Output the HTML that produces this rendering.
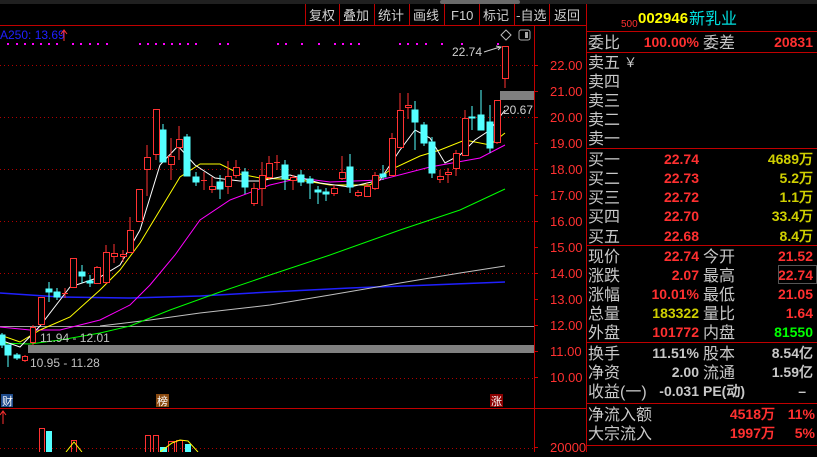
<!DOCTYPE html>
<html><head><meta charset="utf-8"><style>
html,body{margin:0;padding:0;background:#000;}
body{width:817px;height:452px;overflow:hidden;}
svg text{font-family:"Liberation Sans","WenQuanYi Zen Hei",sans-serif;}
.cn{font-family:"WenQuanYi Zen Hei","Noto Sans CJK SC",sans-serif;}
</style></head><body>
<svg width="817" height="452" viewBox="0 0 817 452" xmlns="http://www.w3.org/2000/svg">
<rect width="817" height="452" fill="#000"/>
<!-- top bar -->
<rect x="0" y="0" width="817" height="4" fill="#202020"/>
<rect x="440" y="0" width="80" height="4" rx="2" fill="#6a6a6a"/>
<g stroke="#c00000" stroke-width="1" fill="none">
<line x1="0" y1="25.5" x2="586" y2="25.5"/>
<line x1="305.5" y1="4" x2="305.5" y2="25"/><line x1="339.5" y1="4" x2="339.5" y2="25"/>
<line x1="374.5" y1="4" x2="374.5" y2="25"/><line x1="409.5" y1="4" x2="409.5" y2="25"/>
<line x1="444.5" y1="4" x2="444.5" y2="25"/><line x1="479.5" y1="4" x2="479.5" y2="25"/>
<line x1="514.5" y1="4" x2="514.5" y2="25"/><line x1="549.5" y1="4" x2="549.5" y2="25"/>
<line x1="586.5" y1="4" x2="586.5" y2="452"/>
<line x1="534.5" y1="25" x2="534.5" y2="452"/>
<line x1="0" y1="408.5" x2="586" y2="408.5"/>
</g>
<g fill="#d0d0d0" font-size="13" class="cn">
<text x="309" y="20" class="cn">复权</text><text x="343" y="20" class="cn">叠加</text>
<text x="378" y="20" class="cn">统计</text><text x="413" y="20" class="cn">画线</text>
<text x="451" y="20">F10</text><text x="483" y="20" class="cn">标记</text>
<text x="516" y="20" class="cn">-自选</text><text x="554" y="20" class="cn">返回</text>
</g>
<text x="0" y="39" fill="#2020ff" font-size="12">A250: 13.69</text>
<path d="M64 41 V31 M61 34 L64 30 L67 34" stroke="#ff3030" fill="none"/>
<path d="M506 30 L511 35 L506 40 L501 35 Z" stroke="#bbb" fill="none"/>
<rect x="519" y="30" width="11" height="10" rx="2" stroke="#aaa" fill="none"/><rect x="525" y="32" width="3" height="6" fill="#aaa"/>
<!-- magenta dots -->
<g fill="#ff00ff">
<rect x="7" y="43" width="2" height="2"/><rect x="16" y="43" width="2" height="2"/><rect x="24" y="43" width="2" height="2"/><rect x="32" y="43" width="2" height="2"/><rect x="40" y="43" width="2" height="2"/><rect x="48" y="43" width="2" height="2"/><rect x="56" y="43" width="2" height="2"/>
<rect x="72" y="43" width="2" height="2"/><rect x="80" y="43" width="2" height="2"/><rect x="89" y="43" width="2" height="2"/><rect x="97" y="43" width="2" height="2"/><rect x="106" y="43" width="2" height="2"/>
<rect x="139" y="43" width="2" height="2"/><rect x="147" y="43" width="2" height="2"/><rect x="155" y="43" width="2" height="2"/><rect x="163" y="43" width="2" height="2"/><rect x="171" y="43" width="2" height="2"/><rect x="179" y="43" width="2" height="2"/><rect x="187" y="43" width="2" height="2"/><rect x="195" y="43" width="2" height="2"/>
<rect x="219" y="43" width="2" height="2"/><rect x="227" y="43" width="2" height="2"/>
<rect x="277" y="43" width="2" height="2"/><rect x="285" y="43" width="2" height="2"/><rect x="301" y="43" width="2" height="2"/><rect x="318" y="43" width="2" height="2"/>
<rect x="334" y="43" width="2" height="2"/><rect x="342" y="43" width="2" height="2"/><rect x="350" y="43" width="2" height="2"/><rect x="358" y="43" width="2" height="2"/>
<rect x="399" y="43" width="2" height="2"/><rect x="407" y="43" width="2" height="2"/><rect x="416" y="43" width="2" height="2"/><rect x="425" y="43" width="2" height="2"/><rect x="441" y="43" width="2" height="2"/><rect x="461" y="43" width="2" height="2"/><rect x="497" y="43" width="2" height="2"/>
</g>
<!-- grid -->
<g stroke="#b00000" stroke-dasharray="1,3">
<line x1="0" y1="65.5" x2="534" y2="65.5"/><line x1="0" y1="117.5" x2="534" y2="117.5"/>
<line x1="0" y1="169.5" x2="534" y2="169.5"/><line x1="0" y1="221.5" x2="534" y2="221.5"/>
<line x1="0" y1="273.5" x2="534" y2="273.5"/><line x1="0" y1="378.5" x2="534" y2="378.5"/>
<line x1="0" y1="448.5" x2="534" y2="448.5"/>
</g>
<!-- axis -->
<g stroke="#d00000"><line x1="534" y1="65.5" x2="538" y2="65.5"/><line x1="534" y1="91.5" x2="538" y2="91.5"/><line x1="534" y1="117.5" x2="538" y2="117.5"/><line x1="534" y1="143.5" x2="538" y2="143.5"/><line x1="534" y1="169.5" x2="538" y2="169.5"/><line x1="534" y1="195.5" x2="538" y2="195.5"/><line x1="534" y1="221.5" x2="538" y2="221.5"/><line x1="534" y1="247.5" x2="538" y2="247.5"/><line x1="534" y1="273.5" x2="538" y2="273.5"/><line x1="534" y1="299.5" x2="538" y2="299.5"/><line x1="534" y1="325.5" x2="538" y2="325.5"/><line x1="534" y1="351.5" x2="538" y2="351.5"/><line x1="534" y1="377.5" x2="538" y2="377.5"/><line x1="534" y1="447.5" x2="538" y2="447.5"/></g>
<g fill="#ff3030" font-size="13">
<text x="550" y="70">22.00</text><text x="550" y="96">21.00</text><text x="550" y="122">20.00</text><text x="550" y="148">19.00</text><text x="550" y="174">18.00</text><text x="550" y="200">17.00</text><text x="550" y="226">16.00</text><text x="550" y="252">15.00</text><text x="550" y="278">14.00</text><text x="550" y="304">13.00</text><text x="550" y="330">12.00</text><text x="550" y="356">11.00</text><text x="550" y="382">10.00</text><text x="550" y="452">20000</text>
</g>
<!-- bands -->
<line x1="0" y1="326.5" x2="534" y2="326.5" stroke="#a0a0a0"/>
<rect x="28" y="345" width="506" height="8" fill="#808080"/>
<rect x="500" y="91" width="34" height="9" fill="#808080"/>
<!-- MAs -->
<g fill="none" stroke-width="1">
<polyline stroke="#2020ff" stroke-width="1.5" points="0,293 60,297 130,298 200,296 270,292 350,288 430,285 505,282"/>
<polyline stroke="#c0c0c0" points="100,326 150,320 200,313 270,305 330,295 400,283 460,273 505,266"/>
<polyline stroke="#00ff00" points="0,343 30,344 60,340 100,333 130,326 170,310 220,292 270,275 330,255 400,230 460,210 505,189"/>
<polyline stroke="#ff00ff" points="0,327 30,330 60,330 100,320 130,305 150,285 175,255 200,220 230,200 270,185 300,178 330,182 380,180 430,167 480,158 505,145"/>
<polyline stroke="#ffff00" points="0,335 20,342 40,330 70,317 100,290 120,270 140,243 160,210 180,177 200,164 220,164 240,174 260,178 300,180 330,185 370,185 390,170 420,156 440,150 465,140 490,145 505,133"/>
<polyline stroke="#ffffff" points="0,340 20,347 40,326 70,287 100,277 120,265 140,230 160,165 178,146 195,165 215,178 240,181 260,181 290,175 320,183 350,187 380,180 400,150 415,130 430,138 445,163 460,155 475,140 490,130 505,110"/>
</g>
<!-- candles -->
<g id="c" stroke-width="1">
<g stroke="#54ffff" fill="#54ffff">
<line x1="2" y1="333" x2="2" y2="348"/><rect x="-1" y="335" width="6" height="10"/>
<line x1="8" y1="345" x2="8" y2="367"/><rect x="5" y="345" width="6" height="10"/>
<line x1="17" y1="353" x2="17" y2="360"/><rect x="14" y="355" width="6" height="3"/>
<line x1="49" y1="282" x2="49" y2="302"/><rect x="46" y="289" width="6" height="3"/>
<line x1="57" y1="288" x2="57" y2="300"/><rect x="54" y="292" width="6" height="5"/>
<line x1="82" y1="265" x2="82" y2="283"/><rect x="79" y="272" width="6" height="4"/>
<line x1="90" y1="275" x2="90" y2="287"/><rect x="87" y="281" width="6" height="2"/>
<line x1="163" y1="124" x2="163" y2="162"/><rect x="160" y="130" width="6" height="32"/>
<line x1="187" y1="134" x2="187" y2="176"/><rect x="184" y="137" width="6" height="39"/>
<line x1="196" y1="172" x2="196" y2="186"/><rect x="193" y="177" width="6" height="5"/>
<line x1="220" y1="175" x2="220" y2="199"/><rect x="217" y="182" width="6" height="7"/>
<line x1="245" y1="168" x2="245" y2="194"/><rect x="242" y="172" width="6" height="15"/>
<line x1="285" y1="160" x2="285" y2="190"/><rect x="282" y="165" width="6" height="14"/>
<line x1="301" y1="170" x2="301" y2="186"/><rect x="298" y="175" width="6" height="7"/>
<line x1="310" y1="176" x2="310" y2="199"/><rect x="307" y="179" width="6" height="4"/>
<line x1="318" y1="186" x2="318" y2="204"/><rect x="315" y="190" width="6" height="2"/>
<line x1="326" y1="188" x2="326" y2="201"/><rect x="323" y="192" width="6" height="2"/>
<line x1="350" y1="154" x2="350" y2="193"/><rect x="347" y="167" width="6" height="20"/>
<line x1="383" y1="165" x2="383" y2="180"/><rect x="380" y="174" width="6" height="3"/>
<line x1="415" y1="101" x2="415" y2="150"/><rect x="412" y="110" width="6" height="12"/>
<line x1="424" y1="122" x2="424" y2="146"/><rect x="421" y="125" width="6" height="18"/>
<line x1="432" y1="137" x2="432" y2="178"/><rect x="429" y="142" width="6" height="31"/>
<line x1="472" y1="106" x2="472" y2="130"/><rect x="469" y="117" width="6" height="1"/>
<line x1="481" y1="90" x2="481" y2="130"/><rect x="478" y="115" width="6" height="15"/>
<line x1="490" y1="105" x2="490" y2="153"/><rect x="487" y="122" width="6" height="26"/>
</g>
<g stroke="#ff3232" fill="#000">
<line x1="25" y1="355" x2="25" y2="362"/><rect x="22.5" y="356.5" width="5" height="4"/>
<line x1="33" y1="325" x2="33" y2="345"/><rect x="30.5" y="327.5" width="5" height="15"/>
<rect x="38.5" y="297.5" width="6" height="27"/>
<line x1="65" y1="288" x2="65" y2="298"/><line x1="62" y1="293.5" x2="68" y2="293.5"/>
<rect x="70.5" y="258.5" width="6" height="29"/>
<line x1="97" y1="266" x2="97" y2="283"/><rect x="94.5" y="267.5" width="6" height="16"/>
<line x1="106" y1="245" x2="106" y2="284"/><rect x="103.5" y="252.5" width="6" height="30"/>
<line x1="114" y1="244" x2="114" y2="263"/><rect x="111.5" y="253.5" width="6" height="3"/>
<line x1="123" y1="250" x2="123" y2="262"/><rect x="120.5" y="254.5" width="6" height="2"/>
<line x1="130" y1="217" x2="130" y2="252"/><rect x="127.5" y="230.5" width="6" height="22"/>
<rect x="136.5" y="189.5" width="6" height="32"/>
<line x1="147" y1="145" x2="147" y2="196"/><rect x="144.5" y="157.5" width="6" height="12"/>
<line x1="156" y1="109" x2="156" y2="160"/><rect x="153.5" y="109.5" width="6" height="45"/>
<line x1="171" y1="138" x2="171" y2="180"/><rect x="168.5" y="156.5" width="6" height="8"/>
<line x1="179" y1="126" x2="179" y2="160"/><rect x="176.5" y="139.5" width="6" height="8"/>
<line x1="204" y1="172" x2="204" y2="190"/><line x1="201" y1="180.5" x2="207" y2="180.5"/>
<line x1="212" y1="177" x2="212" y2="193"/><rect x="209.5" y="186.5" width="6" height="3"/>
<line x1="228" y1="161" x2="228" y2="194"/><rect x="225.5" y="176.5" width="6" height="10"/>
<line x1="236" y1="160" x2="236" y2="178"/><rect x="233.5" y="167.5" width="6" height="8"/>
<line x1="254" y1="183" x2="254" y2="206"/><rect x="251.5" y="188.5" width="6" height="15"/>
<line x1="262" y1="162" x2="262" y2="206"/><rect x="259.5" y="175.5" width="6" height="13"/>
<line x1="269" y1="156" x2="269" y2="180"/><rect x="266.5" y="163.5" width="6" height="14"/>
<line x1="277" y1="155" x2="277" y2="170"/><line x1="274" y1="162.5" x2="280" y2="162.5"/>
<line x1="293" y1="175" x2="293" y2="190"/><rect x="290.5" y="177.5" width="6" height="3"/>
<line x1="334" y1="185" x2="334" y2="196"/><rect x="331.5" y="188.5" width="6" height="5"/>
<line x1="342" y1="156" x2="342" y2="180"/><rect x="339.5" y="172.5" width="6" height="6"/>
<line x1="358" y1="190" x2="358" y2="197"/><rect x="355.5" y="192.5" width="6" height="3"/>
<line x1="367" y1="183" x2="367" y2="197"/><rect x="364.5" y="186.5" width="6" height="10"/>
<line x1="375" y1="172" x2="375" y2="190"/><rect x="372.5" y="175.5" width="6" height="13"/>
<line x1="392" y1="133" x2="392" y2="176"/><rect x="389.5" y="138.5" width="6" height="37"/>
<line x1="400" y1="93" x2="400" y2="148"/><rect x="397.5" y="110.5" width="6" height="37"/>
<line x1="408" y1="93" x2="408" y2="119"/><rect x="405.5" y="105.5" width="6" height="2"/>
<line x1="440" y1="170" x2="440" y2="183"/><rect x="437.5" y="176.5" width="6" height="3"/>
<line x1="448" y1="168" x2="448" y2="183"/><rect x="445.5" y="172.5" width="6" height="2"/>
<line x1="456" y1="150" x2="456" y2="176"/><rect x="453.5" y="153.5" width="6" height="15"/>
<line x1="465" y1="110" x2="465" y2="156"/><rect x="462.5" y="118.5" width="6" height="37"/>
<line x1="497" y1="100" x2="497" y2="144"/><rect x="494.5" y="100.5" width="6" height="42"/>
<line x1="505" y1="46" x2="505" y2="88"/><rect x="502.5" y="46.5" width="6" height="32"/>
</g>
</g>
<!-- annotations -->
<text x="452" y="56" fill="#d0d0d0" font-size="12">22.74</text>
<path d="M484 52 L500 47 M496 46 L501 47 L498 50" stroke="#ccc" fill="none"/>
<text x="503" y="114" fill="#d0d0d0" font-size="12">20.67</text>
<text x="40" y="342" fill="#c0c0c0" font-size="12">11.94 - 12.01</text>
<text x="30" y="367" fill="#c0c0c0" font-size="12">10.95 - 11.28</text>
<rect x="1" y="394" width="12" height="13" fill="#1e4a8a"/><text x="2" y="405" fill="#fff" font-size="11" class="cn">财</text>
<rect x="156" y="394" width="13" height="13" fill="#8a4a10"/><text x="157" y="405" fill="#fff" font-size="11" class="cn">榜</text>
<rect x="490" y="394" width="13" height="13" fill="#8a0000"/><text x="491" y="405" fill="#fff" font-size="11" class="cn">涨</text>
<path d="M3 424 V412 M0 415 L3 411 L6 415" stroke="#ff3030" fill="none"/>
<!-- volume -->
<g stroke="#ff3232" fill="none">
<rect x="39.5" y="428.5" width="5" height="30"/><rect x="71.5" y="440.5" width="5" height="20"/>
<rect x="145.5" y="435.5" width="5" height="20"/><rect x="153.5" y="435.5" width="5" height="20"/>
<rect x="168.5" y="441.5" width="6" height="20"/><rect x="176.5" y="440.5" width="6" height="20"/>
</g>
<g fill="#54ffff"><rect x="46" y="431" width="6" height="22"/><rect x="160" y="447" width="7" height="6"/><rect x="185" y="444" width="6" height="8"/></g>
<polyline points="66,452 74,442 82,452" stroke="#ffff00" fill="none"/>
<polyline points="160,452 172,443 180,440 188,441 198,452" stroke="#ffff00" fill="none"/>
<!-- right panel -->
<g stroke="#c00000">
<line x1="586" y1="31.5" x2="817" y2="31.5"/><line x1="586" y1="52.5" x2="817" y2="52.5"/>
<line x1="586" y1="148.5" x2="817" y2="148.5"/><line x1="586" y1="245.5" x2="817" y2="245.5"/>
<line x1="586" y1="342.5" x2="817" y2="342.5"/><line x1="586" y1="403.5" x2="817" y2="403.5"/>
<line x1="586" y1="445.5" x2="817" y2="445.5"/>
</g>
<text x="621" y="27" fill="#ff3030" font-size="10">500</text>
<text x="638" y="23" fill="#ffff00" font-size="15" font-weight="bold">002946</text>
<text x="689" y="24" fill="#00e0e0" font-size="16" class="cn">新乳业</text>
<g fill="#c8c8c8" font-size="16" class="cn">
<text x="588" y="48">委比</text><text x="703" y="48">委差</text>
<text x="588" y="68">卖五</text><text x="588" y="87">卖四</text><text x="588" y="106">卖三</text><text x="588" y="125">卖二</text><text x="588" y="144">卖一</text>
<text x="588" y="165">买一</text><text x="588" y="184">买二</text><text x="588" y="203">买三</text><text x="588" y="222">买四</text><text x="588" y="242">买五</text>
<text x="588" y="262">现价</text><text x="703" y="262">今开</text>
<text x="588" y="281">涨跌</text><text x="703" y="281">最高</text>
<text x="588" y="300">涨幅</text><text x="703" y="300">最低</text>
<text x="588" y="319">总量</text><text x="703" y="319">量比</text>
<text x="588" y="338">外盘</text><text x="703" y="338">内盘</text>
<text x="588" y="359">换手</text><text x="703" y="359">股本</text>
<text x="588" y="378">净资</text><text x="703" y="378">流通</text>
<text x="588" y="397">收益(一)</text>
<text x="588" y="420">净流入额</text><text x="588" y="439">大宗流入</text>
</g>
<text x="624" y="67" fill="#c8c8c8" font-size="13">￥</text>
<g font-size="14" font-weight="bold" text-anchor="end">
<text x="699" y="47" fill="#ff3030">100.00%</text><text x="813" y="47" fill="#ff3030">20831</text>
<g fill="#ff3030"><text x="699" y="164">22.74</text><text x="699" y="183">22.73</text><text x="699" y="202">22.72</text><text x="699" y="221">22.70</text><text x="699" y="241">22.68</text>
<text x="699" y="261">22.74</text><text x="699" y="280">2.07</text><text x="699" y="299">10.01%</text><text x="699" y="337">101772</text>
<text x="813" y="261">21.52</text><text x="813" y="280">22.74</text><text x="813" y="299">21.05</text><text x="813" y="318">1.64</text>
<text x="775" y="419">4518万</text><text x="815" y="419">11%</text><text x="775" y="438">1997万</text><text x="815" y="438">5%</text></g>
<g fill="#d0d000"><text x="813" y="164">4689万</text><text x="813" y="183">5.2万</text><text x="813" y="202">1.1万</text><text x="813" y="221">33.4万</text><text x="813" y="241">8.4万</text><text x="699" y="318">183322</text></g>
<text x="813" y="337" fill="#00ff00">81550</text>
<g fill="#c8c8c8"><text x="699" y="358">11.51%</text><text x="699" y="377">2.00</text><text x="699" y="396">-0.031</text>
<text x="813" y="358">8.54亿</text><text x="813" y="377">1.59亿</text><text x="806" y="396">–</text></g>
</g>
<text x="703" y="396" fill="#c8c8c8" font-size="14" font-weight="bold">PE(动)</text>
<rect x="778.5" y="265.5" width="38" height="18" fill="none" stroke="#555"/>
</svg>
</body></html>
